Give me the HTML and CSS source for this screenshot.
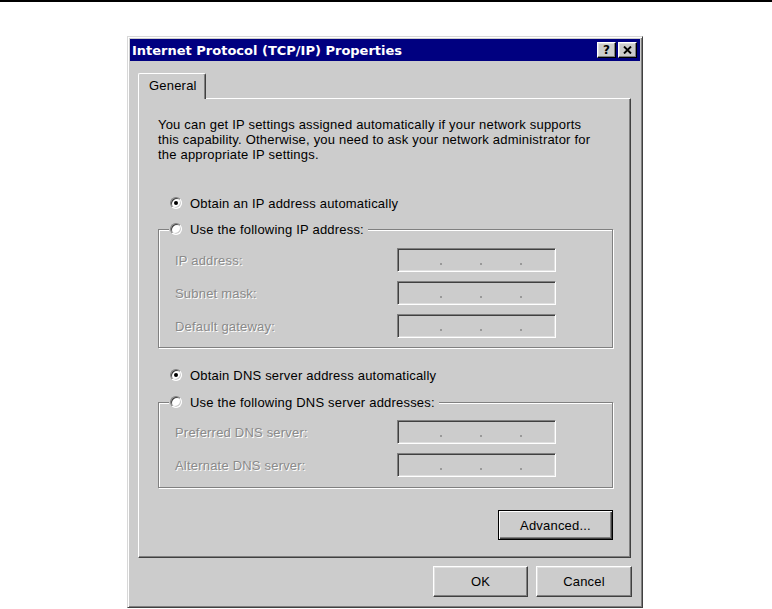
FILE: index.html
```html
<!DOCTYPE html>
<html lang="en">
<head>
<meta charset="utf-8">
<title>Internet Protocol (TCP/IP) Properties</title>
<link rel="stylesheet" href="styles.css">
</head>
<body>
<div class="topline"></div>
<div class="window">
  <div class="titlebar">
    <span class="title">Internet Protocol (TCP/IP) Properties</span>
    <div class="caption-btns">
      <div class="cbtn help">?</div>
      <div class="cbtn close"><svg width="9" height="8" viewBox="0 0 9 8"><path d="M1 0.5L8 7.5M8 0.5L1 7.5" stroke="#000" stroke-width="1.9" fill="none"/></svg></div>
    </div>
  </div>
  <div class="body">
    <div class="tabs"><div class="tab">General</div></div>
    <div class="panel">
      <p class="intro">You can get IP settings assigned automatically if your network supports<br>this capability. Otherwise, you need to ask your network administrator for<br>the appropriate IP settings.</p>

      <div class="radio-row first"><span class="radio checked"></span><span>Obtain an IP address automatically</span></div>
      <fieldset class="group g1">
        <legend><span class="radio"></span><span>Use the following IP address:</span></legend>
        <div class="field"><span class="lbl">IP address:</span><span class="ipbox"><i class="seg"></i><b class="dot"></b><i class="seg"></i><b class="dot"></b><i class="seg"></i><b class="dot"></b></span></div>
        <div class="field"><span class="lbl">Subnet mask:</span><span class="ipbox"><i class="seg"></i><b class="dot"></b><i class="seg"></i><b class="dot"></b><i class="seg"></i><b class="dot"></b></span></div>
        <div class="field"><span class="lbl">Default gateway:</span><span class="ipbox"><i class="seg"></i><b class="dot"></b><i class="seg"></i><b class="dot"></b><i class="seg"></i><b class="dot"></b></span></div>
      </fieldset>

      <div class="radio-row dns"><span class="radio checked"></span><span>Obtain DNS server address automatically</span></div>
      <fieldset class="group g2">
        <legend><span class="radio"></span><span>Use the following DNS server addresses:</span></legend>
        <div class="field"><span class="lbl">Preferred DNS server:</span><span class="ipbox"><i class="seg"></i><b class="dot"></b><i class="seg"></i><b class="dot"></b><i class="seg"></i><b class="dot"></b></span></div>
        <div class="field"><span class="lbl">Alternate DNS server:</span><span class="ipbox"><i class="seg"></i><b class="dot"></b><i class="seg"></i><b class="dot"></b><i class="seg"></i><b class="dot"></b></span></div>
      </fieldset>

      <div class="adv-row"><div class="btn default adv">Advanced...</div></div>
    </div>
    <div class="footer">
      <div class="btn ok">OK</div>
      <div class="btn cancel">Cancel</div>
    </div>
  </div>
</div>
</body>
</html>
```
FILE: styles.css
```css
* { box-sizing: border-box; }
html, body { margin: 0; padding: 0; background: #fff; }
body {
  font-family: "Liberation Sans", Arial, sans-serif;
  font-size: 13px;
  letter-spacing: 0.2px;
  color: #000;
}
.topline { height: 2px; background: #000; }

.window {
  width: 516px;
  height: 572px;
  margin: 34px 0 0 127px;
  background: #ccc;
  border: 1px solid;
  border-color: #d8d8d8 #404040 #404040 #d8d8d8;
  box-shadow: inset 1px 1px #fff, inset -1px -1px #808080;
  padding: 2px;
  display: flex;
  flex-direction: column;
}

.titlebar {
  height: 22px;
  background: #000080;
  display: flex;
  align-items: center;
  justify-content: space-between;
  padding: 0 3px 0 2px;
}
.title {
  font-family: "DejaVu Sans", Verdana, sans-serif;
  font-weight: bold;
  font-size: 13px;
  letter-spacing: 0;
  color: #fff;
  white-space: nowrap;
}
.caption-btns { display: flex; gap: 2px; }
.cbtn {
  width: 19px;
  height: 16px;
  background: #ccc;
  border: 1px solid;
  border-color: #fff #000 #000 #fff;
  box-shadow: inset -1px -1px #808080, inset 1px 1px #dfdfdf;
  display: flex;
  align-items: center;
  justify-content: center;
}
.help {
  font-family: "DejaVu Sans", Verdana, sans-serif;
  font-weight: bold;
  font-size: 12px;
  letter-spacing: 0;
  line-height: 1;
}

.body {
  flex: 1;
  display: flex;
  flex-direction: column;
  padding: 12px 8px 0 8px;
}
.tabs { display: flex; }
.tab {
  position: relative;
  z-index: 1;
  width: 68px;
  height: 26px;
  margin-bottom: -1px;
  background: #ccc;
  border-top: 1px solid #fff;
  border-left: 1px solid #fff;
  border-right: 1px solid #404040;
  box-shadow: inset -1px 0 #808080;
  border-radius: 2px 2px 0 0;
  padding: 0 0 2px 10px;
  display: flex;
  align-items: center;
}

.panel {
  margin-right: 1px;
  border: 1px solid;
  border-color: #fff #404040 #404040 #fff;
  box-shadow: inset -1px -1px #808080;
  padding: 18px 17px 17px 19px;
}
.intro { margin: 0; line-height: 15px; }

.radio-row {
  display: flex;
  align-items: center;
  gap: 8px;
  height: 16px;
  padding-left: 12px;
}
.radio-row.first { margin-top: 33px; }
.radio-row.dns { margin-top: 19px; }

.radio {
  width: 12px;
  height: 12px;
  flex-shrink: 0;
  border-radius: 50%;
  background: #fff;
  border: 1px solid;
  border-color: #808080 #fff #fff #808080;
  box-shadow: inset 1px 1px #404040, inset -1px -1px #ccc;
  display: flex;
  align-items: center;
  justify-content: center;
}
.radio.checked::after {
  content: "";
  width: 4px;
  height: 4px;
  border-radius: 50%;
  background: #000;
}

.group {
  margin: 10px 0 0 0;
  min-width: 0;
  border: 1px solid #808080;
  box-shadow: inset 1px 1px #fff, 1px 1px #fff;
  padding: 11px 0 9px 16px;
}
.group.g2 { margin-top: 11px; padding-top: 10px; padding-bottom: 10px; }
.group legend {
  margin-left: -6px;
  padding: 0 4px 0 1px;
  height: 16px;
  display: flex;
  align-items: center;
  gap: 8px;
  background: #ccc;
}
.field {
  display: flex;
  align-items: center;
  height: 24px;
}
.field + .field { margin-top: 9px; }
.lbl {
  width: 222px;
  color: #8a8a8a;
  text-shadow: 1px 1px 0 #fff;
}
.ipbox {
  width: 159px;
  height: 24px;
  border: 1px solid;
  border-color: #808080 #fff #fff #808080;
  box-shadow: inset 1px 1px #404040, inset -1px -1px #dfdfdf;
  display: flex;
  align-items: flex-end;
  padding: 0 0 6px 2px;
}
.seg { display: block; width: 38px; }
.seg:first-child { width: 40px; }
.dot { display: block; width: 2px; height: 2px; background: #999; }

.adv-row { display: flex; justify-content: flex-end; margin-top: 22px; }
.btn {
  height: 31px;
  background: #ccc;
  border: 1px solid;
  border-color: #fff #404040 #404040 #fff;
  box-shadow: inset -1px -1px #808080, inset 1px 1px #dfdfdf;
  display: flex;
  align-items: center;
  justify-content: center;
}
.btn.default {
  border-color: #000;
  box-shadow: inset 1px 1px #fff, inset -1px -1px #404040, inset -2px -2px #808080;
}
.adv { width: 115px; height: 30px; }
.footer {
  display: flex;
  justify-content: flex-end;
  gap: 8px;
  margin-top: 8px;
}
.ok { width: 95px; }
.cancel { width: 96px; }
```
